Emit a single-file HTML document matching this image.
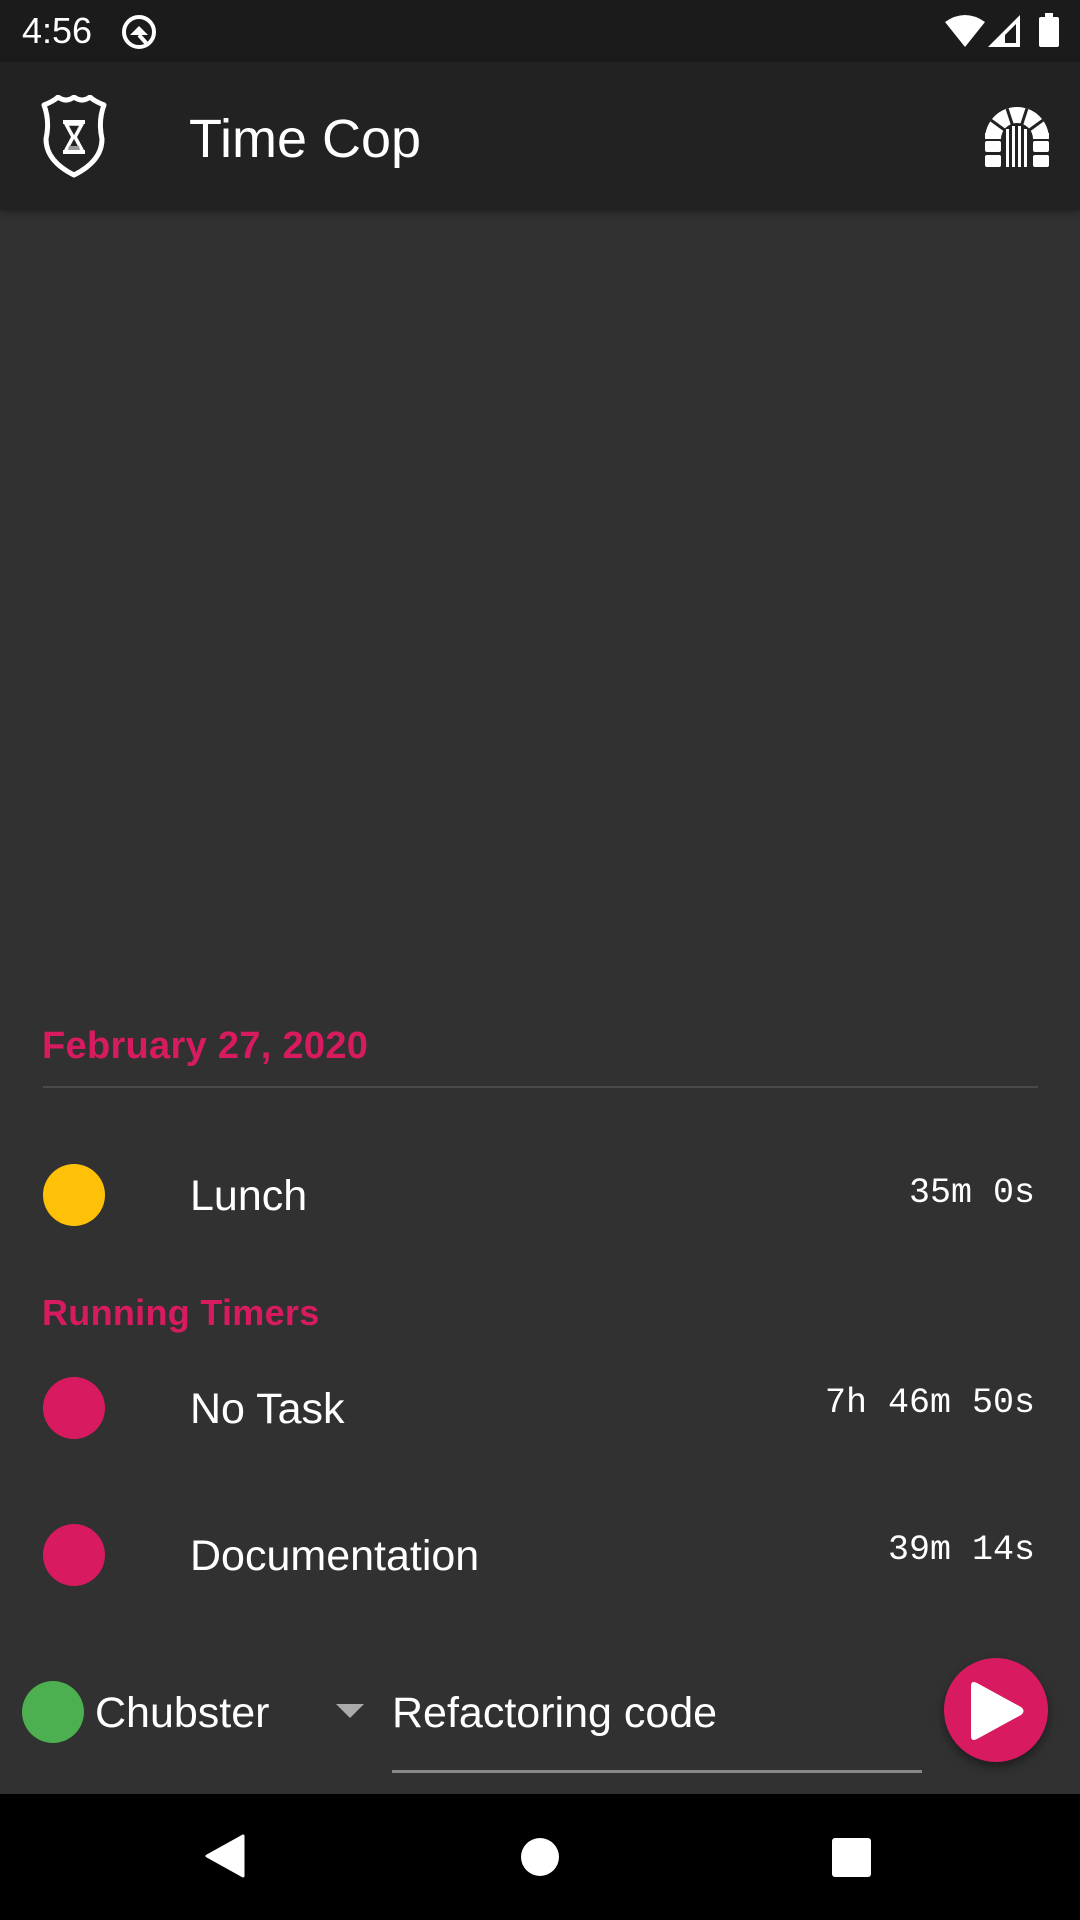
<!DOCTYPE html>
<html><head><meta charset="utf-8">
<style>
*{margin:0;padding:0;box-sizing:border-box}
html,body{width:1080px;height:1920px;overflow:hidden;background:#313131;font-family:"Liberation Sans",sans-serif;color:#fff}
.abs{position:absolute}
#status{left:0;top:0;width:1080px;height:62px;background:#1b1b1b}
#appbar{left:0;top:62px;width:1080px;height:148px;background:#222;box-shadow:0 2px 6px rgba(0,0,0,.35)}
.hdr{color:#d81b60;font-weight:bold;font-size:38px;left:42px;letter-spacing:0.3px}
.dot{width:62px;height:62px;border-radius:50%}
.name{left:190px;font-size:43px}
.time{right:45px;font-family:"Liberation Mono",monospace;font-size:35px}
#nav{left:0;top:1794px;width:1080px;height:126px;background:#000}
</style></head><body>
<div id="status" class="abs">
  <div class="abs" style="left:22px;top:10px;font-size:36px;">4:56</div>
  <svg class="abs" style="left:120px;top:13px" width="38" height="38" viewBox="0 0 38 38">
    <circle cx="19" cy="19" r="15" fill="none" stroke="#fff" stroke-width="4"/>
    <path d="M10 22 L19 13 L28 22 Z" fill="#fff"/>
    <path d="M19 22 L27 31" stroke="#fff" stroke-width="4"/>
  </svg>
  <svg class="abs" style="left:945px;top:14px" width="40" height="33" viewBox="0 0 40 33"><path d="M0 8 Q20 -6 40 8 L20 33 Z" fill="#fff"/></svg>
  <svg class="abs" style="left:988px;top:15px" width="33" height="32" viewBox="0 0 33 32"><path d="M32 0 L32 32 L0 32 Z" fill="#fff"/><path d="M28 9 L28 28 L17 28 L17 20 Z" fill="#1b1b1b"/></svg>
  <div class="abs" style="left:1039px;top:17px;width:20px;height:30px;background:#fff;border-radius:2px"></div>
  <div class="abs" style="left:1045px;top:13px;width:8px;height:5px;background:#fff"></div>
</div>
<div id="appbar" class="abs">
  <svg class="abs" style="left:40px;top:33px" width="68" height="84" viewBox="0 0 68 84">
    <path d="M4 10 Q14 6 18 2 Q26 8 34 2 Q42 8 50 2 Q54 6 64 10 Q58 26 62 44 Q62 66 34 80 Q6 66 6 44 Q10 26 4 10 Z" fill="none" stroke="#fff" stroke-width="5" stroke-linejoin="round"/>
    <path d="M23 27 H45 M23 57 H45" stroke="#fff" stroke-width="4"/>
    <path d="M26 29 L42 29 L35 42 L42 55 L26 55 L33 42 Z" fill="none" stroke="#fff" stroke-width="3.5" stroke-linejoin="round"/>
    <path d="M29 51 L39 51 L40 55 L28 55Z" fill="#999"/>
  </svg>
  <div class="abs" style="left:189px;top:46px;font-size:54px;">Time Cop</div>
  <svg class="abs" style="left:985px;top:45px" width="64" height="64" viewBox="0 0 64 64">
    <path d="M0 32 A32 32 0 0 1 64 32 L48 32 A16 16 0 0 0 16 32 Z" fill="#fff"/>
    <g stroke="#222" stroke-width="3">
      <line x1="32" y1="32" x2="6.1" y2="13.2"/><line x1="32" y1="32" x2="22.1" y2="1.6"/>
      <line x1="32" y1="32" x2="41.9" y2="1.6"/><line x1="32" y1="32" x2="57.9" y2="13.2"/>
    </g>
    <rect x="0" y="34" width="16" height="11" rx="2" fill="#fff"/>
    <rect x="0" y="48" width="16" height="12" rx="2" fill="#fff"/>
    <rect x="48" y="34" width="16" height="11" rx="2" fill="#fff"/>
    <rect x="48" y="48" width="16" height="12" rx="2" fill="#fff"/>
    <rect x="0" y="26" width="16" height="6" fill="#fff"/>
    <rect x="48" y="26" width="16" height="6" fill="#fff"/>
    <g fill="#fff"><rect x="21" y="22" width="3" height="38"/><rect x="27" y="19" width="3" height="41"/><rect x="33" y="19" width="3" height="41"/><rect x="39" y="22" width="3" height="38"/></g>
  </svg>
</div>

<div class="abs hdr" style="top:1025px">February 27, 2020</div>
<div class="abs" style="left:43px;top:1086px;width:995px;height:2px;background:#4a4a4a"></div>

<div class="abs dot" style="left:43px;top:1164px;background:#ffc107"></div>
<div class="abs name" style="top:1172px">Lunch</div>
<div class="abs time" style="top:1173px">35m 0s</div>

<div class="abs hdr" style="top:1292px;font-size:36px">Running Timers</div>

<div class="abs dot" style="left:43px;top:1377px;background:#d81b60"></div>
<div class="abs name" style="top:1385px">No Task</div>
<div class="abs time" style="top:1383px">7h 46m 50s</div>

<div class="abs dot" style="left:43px;top:1524px;background:#d81b60"></div>
<div class="abs name" style="top:1532px">Documentation</div>
<div class="abs time" style="top:1530px">39m 14s</div>

<div class="abs dot" style="left:22px;top:1681px;background:#4caf50"></div>
<div class="abs" style="left:95px;top:1689px;font-size:43px">Chubster</div>
<svg class="abs" style="left:336px;top:1704px" width="28" height="16" viewBox="0 0 28 16"><path d="M0 0 H28 L14 14 Z" fill="#aaa"/></svg>
<div class="abs" style="left:392px;top:1689px;font-size:43px">Refactoring code</div>
<div class="abs" style="left:392px;top:1770px;width:530px;height:3px;background:#888"></div>

<div class="abs" style="left:944px;top:1658px;width:104px;height:104px;border-radius:50%;background:#d81b60;box-shadow:0 5px 10px rgba(0,0,0,.4)"></div>
<svg class="abs" style="left:965px;top:1678px" width="64" height="66" viewBox="0 0 64 66"><path d="M6 8 Q6 2 12 5 L56 29 Q61 33 56 37 L12 61 Q6 64 6 58 Z" fill="#fff"/></svg>

<div id="nav" class="abs">
  <svg class="abs" style="left:205px;top:40px" width="40" height="44" viewBox="0 0 40 44"><path d="M38 2 L38 42 L2 22 Z" fill="#fff" stroke="#fff" stroke-width="3" stroke-linejoin="round"/></svg>
  <div class="abs" style="left:521px;top:44px;width:38px;height:38px;border-radius:50%;background:#fff"></div>
  <div class="abs" style="left:832px;top:44px;width:39px;height:39px;border-radius:3px;background:#fff"></div>
</div>
</body></html>
